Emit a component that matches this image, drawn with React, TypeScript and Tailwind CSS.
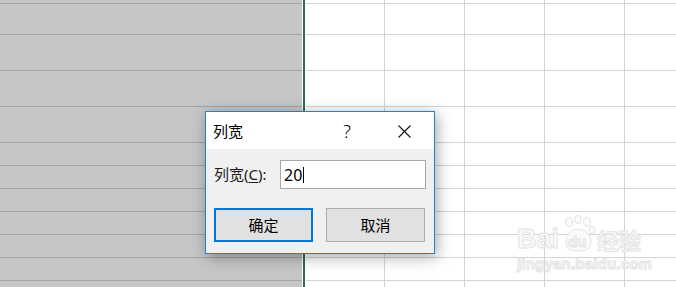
import React from "react";

const GRAY_ROWS = [4, 31, 36, 36, 36, 23, 23, 23, 23, 23, 23, 23];
const COLS = [79, 80, 80, 80, 80];

const font = "font-['Noto_Sans','Noto_Sans_CJK_SC',sans-serif]";

function Sheet() {
    return (
        <div className="flex h-[287px] w-[676px] overflow-hidden bg-white">
            <div className="flex w-[302px] shrink-0 flex-col bg-[#c6c6c6]">
                {GRAY_ROWS.map((h, i) => (
                    <div key={i} className="shrink-0 border-b border-[#a3a3a3]" style={{ height: h }} />
                ))}
            </div>
            <div className="w-[1px] shrink-0 bg-white" />
            <div className="w-[2px] shrink-0 bg-[#217346]" />
            <div className="flex flex-col pl-[1px]">
                {GRAY_ROWS.map((h, i) => (
                    <div key={i} className="flex shrink-0 border-b border-[#d4d4d4]" style={{ height: h }}>
                        {COLS.map((w, j) => (
                            <div key={j} className="h-full shrink-0 border-r border-[#d4d4d4]" style={{ width: w }} />
                        ))}
                    </div>
                ))}
            </div>
        </div>
    );
}

// faint baidu jingyan watermark, bottom right
function Watermark() {
    return (
        <div className="pointer-events-none absolute left-[517px] top-[226px] flex flex-col items-start font-['Liberation_Sans','Noto_Sans_CJK_SC',sans-serif] text-[#fafafa]">
            <div className="flex items-end">
                <span className="text-[27px] font-bold leading-none [-webkit-text-stroke:1px_#e3e3e3]">Bai</span>
                <div className="relative -mt-3 ml-[1px] h-[38px] w-[36px]">
                    <svg width="36" height="38" viewBox="0 0 36 38" className="absolute left-0 top-0">
                        <g fill="#fafafa" stroke="#e3e3e3" strokeWidth="1">
                            <ellipse cx="9" cy="7" rx="3.5" ry="4.5" />
                            <ellipse cx="18" cy="4.5" rx="3.5" ry="4" />
                            <ellipse cx="27" cy="7" rx="3.5" ry="4.5" />
                            <ellipse cx="32" cy="15" rx="3" ry="3.5" />
                            <path d="M6 28 C 6 18, 12 14, 18 14 C 25 14, 31 19, 31 28 C 31 34, 25 36, 18 36 C 10 36, 6 34, 6 28 Z" />
                        </g>
                    </svg>
                    <span className="absolute bottom-[4px] left-[8px] text-[15px] font-bold leading-none text-[#fafafa] [-webkit-text-stroke:1px_#e3e3e3]">du</span>
                </div>
                <span className="ml-[1px] text-[22px] font-bold leading-none [-webkit-text-stroke:1px_#e3e3e3]">经验</span>
            </div>
            <span className="mt-[3px] text-[15px] font-bold leading-none tracking-[0.2px] [-webkit-text-stroke:1px_#e3e3e3]">jingyan.baidu.com</span>
        </div>
    );
}

function Dialog() {
    return (
        <div className={`absolute left-[205px] top-[111px] flex h-[143px] w-[230px] flex-col border border-[#1883d7] bg-[#f0f0f0] shadow-[2px_3px_14px_rgba(0,0,0,0.35)] ${font}`}>
            <div className="flex h-[37px] shrink-0 items-center bg-white pl-[7px] pr-[7px] pt-[1px]">
                <span className="flex-1 text-[15px] text-black">列宽</span>
                <span className="w-[44px] text-center text-[18px] font-light leading-none text-black">?</span>
                <div className="ml-3 flex w-[46px] justify-center">
                    <svg width="13" height="13" viewBox="0 0 13 13">
                        <path d="M0.5 0.5 L12.5 12.5 M12.5 0.5 L0.5 12.5" stroke="#111" strokeWidth="1.1" />
                    </svg>
                </div>
            </div>
            <div className="flex flex-1 flex-col px-[8px] pt-[11px]">
                <div className="flex items-center">
                    <span className="w-[66px] text-[15px] text-[#1a1a1a]">
                        列宽(<span className="underline underline-offset-2">C</span>):
                    </span>
                    <div className="flex h-[29px] w-[146px] items-center border border-[#a8a8a8] bg-white pl-[3px]">
                        <span className="text-[16px] leading-none text-black">20</span>
                        <span className="ml-[1px] h-[16px] w-[1px] bg-black" />
                    </div>
                </div>
                <div className="mt-[19px] flex gap-[13px]">
                    <button className="flex h-[34px] w-[99px] items-center justify-center border-2 border-[#0078d7] bg-[#e1e1e1] text-[15px] text-black">
                        确定
                    </button>
                    <button className="flex h-[34px] w-[99px] items-center justify-center border border-[#adadad] bg-[#e1e1e1] text-[15px] text-black">
                        取消
                    </button>
                </div>
            </div>
        </div>
    );
}

export default function App() {
    return (
        <div className="relative h-[287px] w-[676px] overflow-hidden">
            <Sheet />
            <Watermark />
            <Dialog />
        </div>
    );
}
